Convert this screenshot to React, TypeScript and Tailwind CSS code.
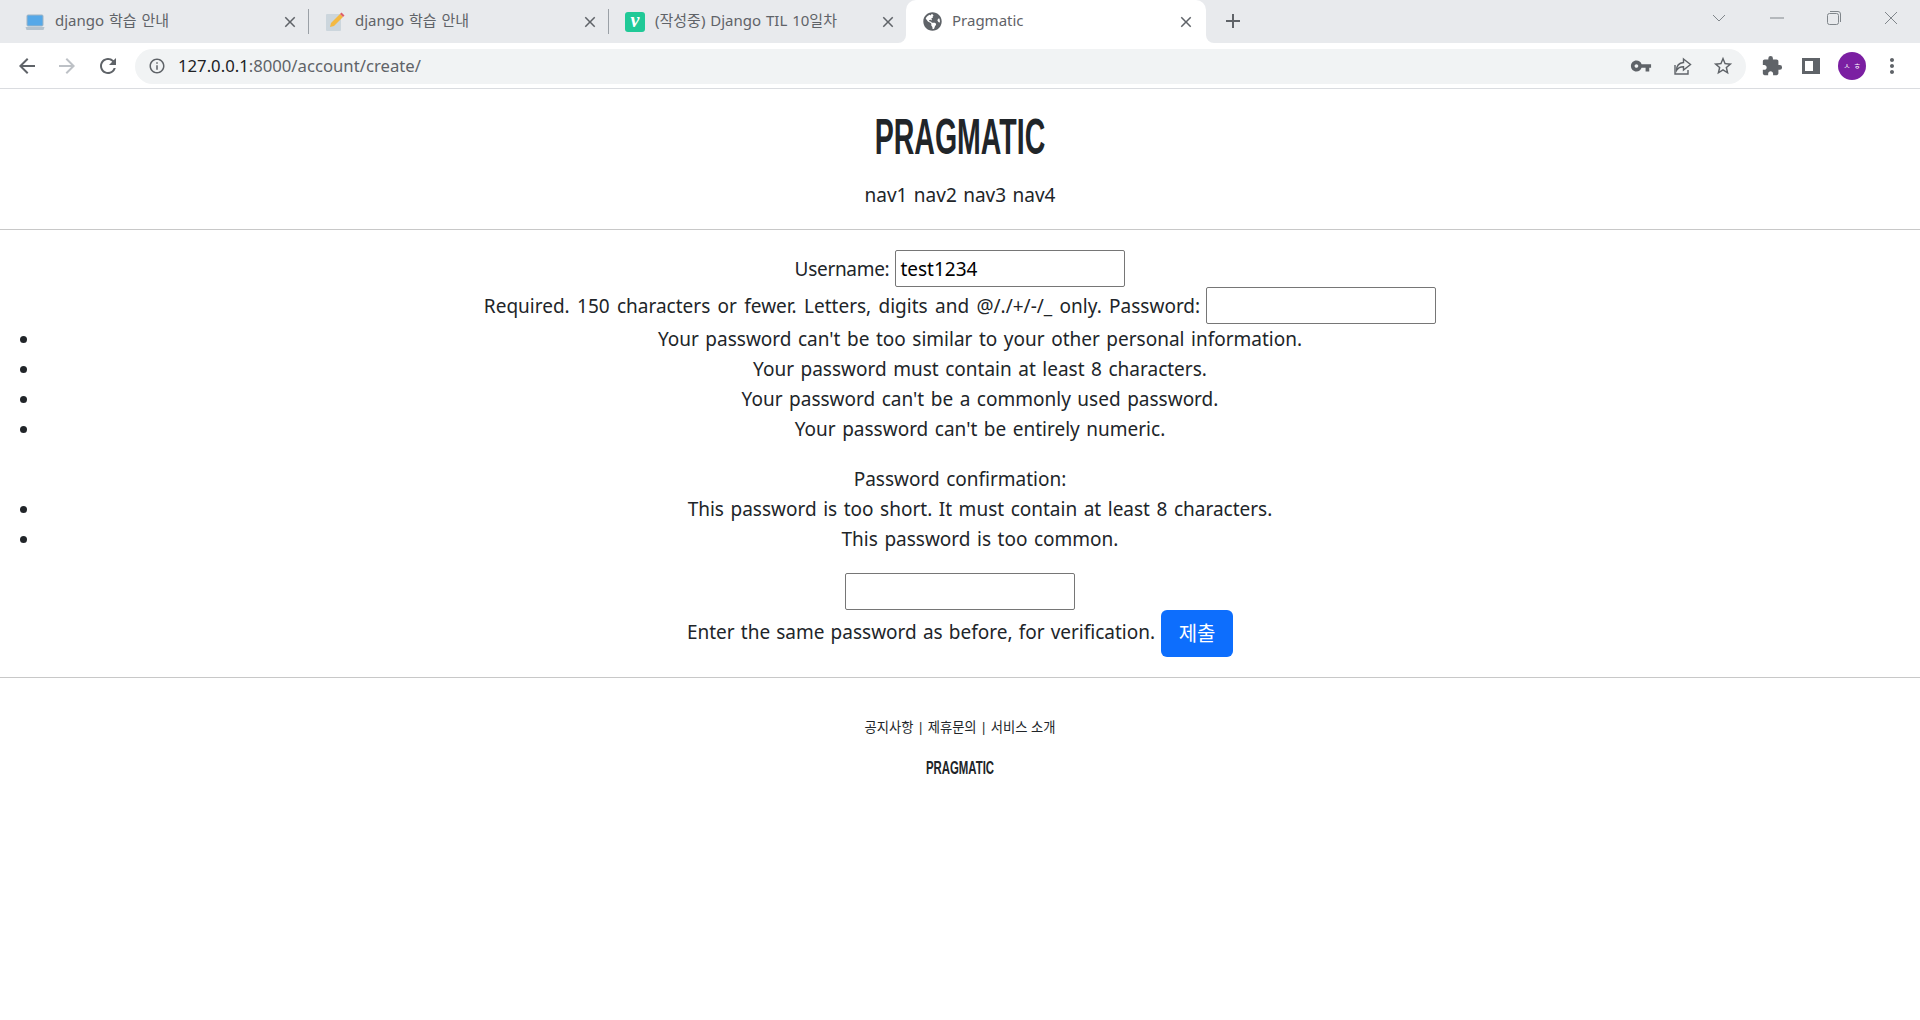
import { MdArrowBack, MdArrowForward, MdRefresh, MdInfoOutline, MdVpnKey, MdStarBorder, MdExtension, MdMoreVert, MdClose, MdAdd } from "react-icons/md"
import { FaGlobeAmericas } from "react-icons/fa"

const bodyFont = "[font-family:'Noto_Sans','Noto_Sans_CJK_KR',sans-serif]"

function Laptop() {
  return (
    <svg width="20" height="20" viewBox="0 0 20 20">
      <rect x="2" y="3" width="16" height="11" rx="1" fill="#55a8e8" stroke="#9fb4c4" />
      <path d="M0.5 15h19l-1 3h-17z" fill="#b4c2cd" />
    </svg>
  )
}

function Memo() {
  return (
    <svg width="20" height="20" viewBox="0 0 20 20">
      <rect x="1" y="2" width="15" height="17" rx="1" fill="#ccd6dd" />
      <path d="M6 11 15 2l3 3-9 9-4 1z" fill="#f4b942" />
      <path d="M15 2l1.5-1.5 3 3L18 5z" fill="#dd5f6b" />
    </svg>
  )
}

function Velog() {
  return (
    <div className="w-5 h-5 rounded-[3px] bg-[#20c997] flex items-center justify-center text-white italic font-bold text-[20px] leading-none pb-[3px] [font-family:'Liberation_Serif',serif]">
      v
    </div>
  )
}

function Tab({ icon, title, width, closeGap, active, sep }: { icon: React.ReactNode; title: string; width: string; closeGap: string; active?: boolean; sep?: boolean }) {
  return (
    <div className={`relative flex items-center h-[43px] pl-4 ${closeGap} ${width} ${active ? "bg-white rounded-t-[10px]" : ""}`}>
      <div className="w-5 h-5 mr-[10px] shrink-0 flex items-center justify-center">{icon}</div>
      <span className="flex-1 text-[15px] pb-[3px] [word-spacing:1px] text-[#5f6368] whitespace-nowrap">{title}</span>
      <MdClose className="text-[#5f6368] w-[18px] h-[18px]" />
      {sep && <div className="absolute right-0 top-[9px] h-[25px] w-px bg-[#9aa0a6]" />}
      {active && (
        <>
          <div className="absolute -left-[8px] bottom-0 w-2 h-2 bg-white">
            <div className="w-2 h-2 bg-[#e8eaed] rounded-br-[8px]" />
          </div>
          <div className="absolute -right-[8px] bottom-0 w-2 h-2 bg-white">
            <div className="w-2 h-2 bg-[#e8eaed] rounded-bl-[8px]" />
          </div>
        </>
      )}
    </div>
  )
}

function FormList({ items }: { items: string[] }) {
  return (
    <ul className="list-disc pl-10 text-center">
      {items.map((item) => (
        <li key={item} className="h-[30px]">{item}</li>
      ))}
    </ul>
  )
}

export default function App() {
  return (
    <div className={`min-h-[1020px] bg-white text-[#212529] ${bodyFont}`}>
      {/* Browser chrome */}
      <div className="h-[43px] bg-[#e8eaed] flex items-start pl-[9px]">
        <Tab icon={<Laptop />} title="django 학습 안내" width="w-[300px]" closeGap="pr-[10px]" sep />
        <Tab icon={<Memo />} title="django 학습 안내" width="w-[300px]" closeGap="pr-[10px]" sep />
        <Tab icon={<Velog />} title="(작성중) Django TIL 10일차" width="w-[297px]" closeGap="pr-[9px]" />
        <Tab icon={<FaGlobeAmericas className="w-[19px] h-[19px] text-[#5f6368]" />} title="Pragmatic" width="w-[300px]" closeGap="pr-[11px]" active />
        <MdAdd className="w-6 h-6 ml-[15px] mt-[9px] text-[#5f6368]" />
        <div className="ml-auto flex items-center h-[36px] text-[#80868b]">
          <svg width="14" height="8" viewBox="0 0 14 8" fill="none" stroke="currentColor"><path d="M1 1l6 6 6-6" /></svg>
          <svg className="ml-[44px]" width="14" height="2" viewBox="0 0 14 2" stroke="currentColor"><path d="M0 1h14" /></svg>
          <svg className="ml-[43px]" width="14" height="14" viewBox="0 0 14 14" fill="none" stroke="currentColor"><rect x=".5" y="2.500" width="11" height="11" rx="2" /><path d="M3 .5h8a2.500 2.500 0 0 1 2.500 2.500v8" /></svg>
          <svg className="ml-[43px] mr-[22px]" width="14" height="14" viewBox="0 0 14 14" stroke="currentColor"><path d="M1 1l12 12M13 1L1 13" /></svg>
        </div>
      </div>
      <div className="h-[46px] bg-white border-b border-[#dadce0] flex items-center pt-px">
        <MdArrowBack className="w-6 h-6 ml-[15px] text-[#5f6368]" />
        <MdArrowForward className="w-6 h-6 ml-[16px] text-[#bdc1c6]" />
        <MdRefresh className="w-6 h-6 ml-[17px] text-[#5f6368]" />
        <div className="h-[35px] ml-[15px] w-[1611px] rounded-full bg-[#f1f3f4] flex items-center pl-[13px] pr-[12px]">
          <MdInfoOutline className="w-[18px] h-[18px] text-[#5f6368]" />
          <span className="ml-[12px] text-[16.7px] text-[#202124]">127.0.0.1<span className="text-[#5f6368]">:8000/account/create/</span></span>
          <div className="ml-auto flex items-center gap-[20px] text-[#5f6368]">
            <MdVpnKey className="w-[22px] h-[22px]" />
            <svg width="20" height="20" viewBox="0 0 20 20" fill="none" stroke="currentColor" strokeWidth="1.400">
              <path d="M3 9v9h13v-4" />
              <path d="M11.500 3l7 5.500-7 5.500v-3.200c-3 0-5.500 1-7 3.700 0-4.500 2.500-7.500 7-8z" />
            </svg>
            <MdStarBorder className="w-[22px] h-[22px]" />
          </div>
        </div>
        <MdExtension className="w-[22px] h-[22px] ml-[15px] text-[#5f6368]" />
        <svg className="ml-[19px] text-[#5f6368]" width="18" height="18" viewBox="0 0 18 18"><path fill="currentColor" fillRule="evenodd" d="M0 1h18v16H0zM3 4v10h8V4z" /></svg>
        <div className="ml-[18px] w-7 h-7 rounded-full bg-[#7b1fa2] flex items-center justify-center gap-[3px] text-white text-[8px]"><span>ㅅ</span><span>ㅎ</span></div>
        <MdMoreVert className="w-6 h-6 ml-[14px] text-[#5f6368]" />
      </div>

      {/* Header */}
      <div className="text-center h-[141px] border-b border-[#c8c8c8]">
        <h1 className="pt-[18px] h-[78px] text-[50px] leading-[60px] font-bold [font-family:'Liberation_Sans_Narrow','Liberation_Sans',sans-serif] scale-x-[0.57]">PRAGMATIC</h1>
        <div className="mt-[15px] text-[19px] leading-[27px] [word-spacing:1.5px]">nav1 nav2 nav3 nav4</div>
      </div>

      {/* Form */}
      <div className="text-[19px] [word-spacing:1.6px] leading-[30px] text-center pt-[20px]">
        <div className="h-[37px] flex justify-center items-center gap-[6px]">
          <span className="tracking-[-0.3px]">Username:</span>
          <input defaultValue="test1234" className="w-[230px] h-[37px] border border-[#767676] rounded-[2px] px-[4px] text-black" />
        </div>
        <div className="h-[37px] flex justify-center items-center gap-[6px] [word-spacing:2.4px]">
          Required. 150 characters or fewer. Letters, digits and @/./+/-/_ only. Password:
          <input className="w-[230px] h-[37px] border border-[#767676] rounded-[2px]" />
        </div>
        <FormList items={["Your password can't be too similar to your other personal information.", "Your password must contain at least 8 characters.", "Your password can't be a commonly used password.", "Your password can't be entirely numeric."]} />
        <div className="mt-[20px] h-[30px]">Password confirmation:</div>
        <FormList items={["This password is too short. It must contain at least 8 characters.", "This password is too common."]} />
        <div className="mt-[19px] h-[37px] flex justify-center">
          <input className="w-[230px] h-[37px] border border-[#767676] rounded-[2px]" />
        </div>
        <div className="h-[47px] flex justify-center items-center gap-[6px]">
          <span className="pb-[3px] [word-spacing:1.2px]">Enter the same password as before, for verification.</span>
          <button className="w-[72px] h-[47px] rounded-[6px] bg-[#0d6efd] text-white text-[20px]">제출</button>
        </div>
      </div>

      {/* Footer */}
      <div className="mt-[20px] border-t border-[#c8c8c8] text-center">
        <div className="mt-[39px] text-[13.3px] leading-[20px]">공지사항 | 제휴문의 | 서비스 소개</div>
        <div className="mt-[19px] text-[19px] leading-[24px] font-bold [font-family:'Liberation_Sans_Narrow','Liberation_Sans',sans-serif] scale-x-[0.6]">PRAGMATIC</div>
      </div>
    </div>
  )
}
